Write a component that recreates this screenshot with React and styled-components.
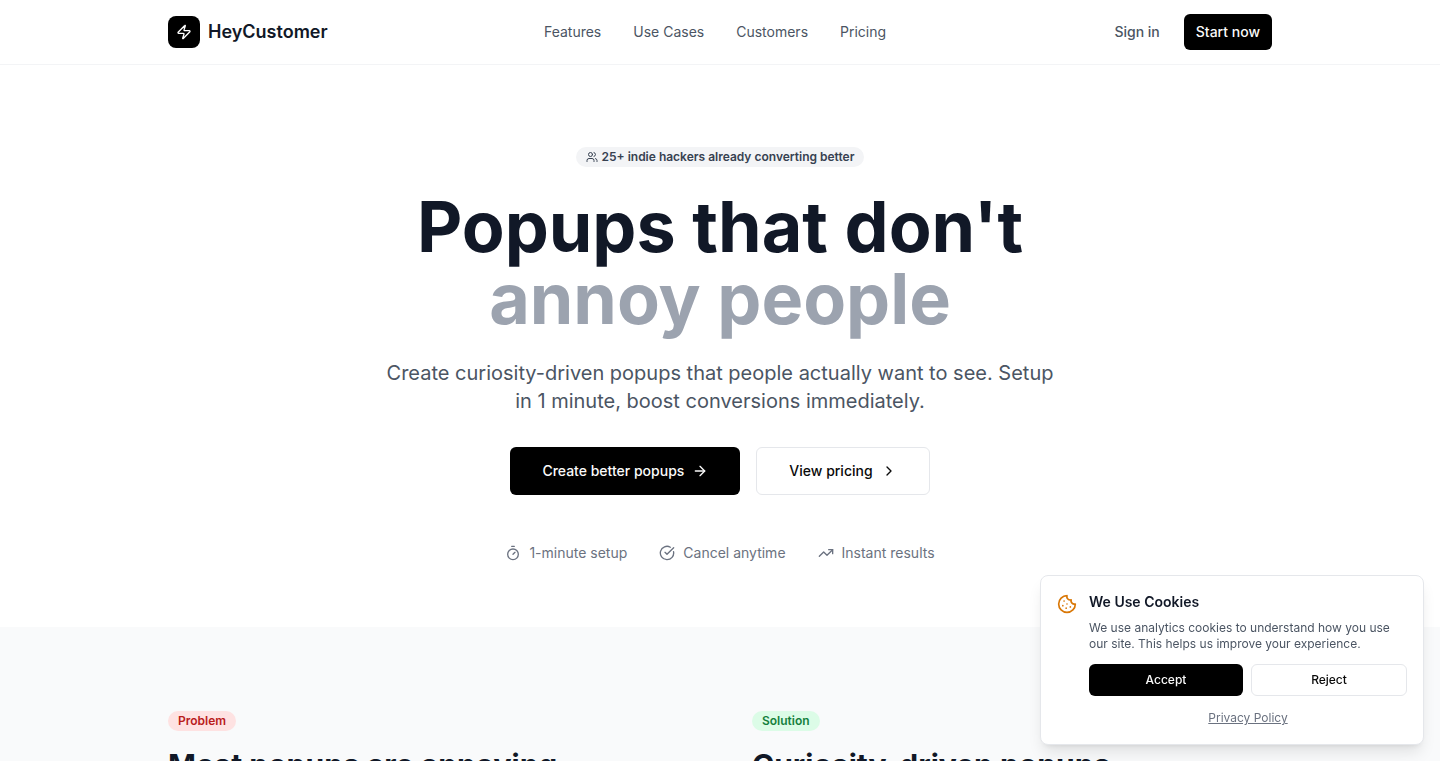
import React from 'react'
import styled, { createGlobalStyle } from 'styled-components';
import { ArrowRight, ChevronRight, CircleCheckBig, Cookie, Timer, TrendingUp, Users, Zap } from 'lucide-react';

const GlobalStyle = createGlobalStyle`
    *, *::before, *::after {
      box-sizing: border-box;
    }
    body {
      margin: 0;
      background-color: #ffffff;
      color: #111827;
      font-family: Inter, 'Liberation Sans', sans-serif;
      font-size: 16px;
      line-height: 24px;
    }
    h1, h2, h3, p {
      margin: 0;
    }
    a {
      color: inherit;
      text-decoration: none;
    }
    svg {
      flex-shrink: 0;
    }
`;

const Container = styled.div`
    max-width: 1152px;
    margin: 0 auto;
    padding: 0 24px;
`;

const Header = styled.header`
    background-color: #ffffff;
    border-bottom: 1px solid #f3f4f6;
`;

const HeaderRow = styled(Container)`
    height: 64px;
    display: flex;
    align-items: center;
    justify-content: space-between;
`;

const Logo = styled.a`
    display: flex;
    align-items: center;
    gap: 8px;
    font-size: 18px;
    line-height: 28px;
    font-weight: 600;
`;

const LogoMark = styled.span`
    width: 32px;
    height: 32px;
    display: flex;
    align-items: center;
    justify-content: center;
    border-radius: 8px;
    background-color: #000000;
    color: #ffffff;
`;

const Nav = styled.nav`
    display: flex;
    gap: 32px;
    font-size: 14px;
    line-height: 20px;
    color: #4b5563;
`;

const Actions = styled.div`
    display: flex;
    align-items: center;
    gap: 12px;
`;

const SignIn = styled.a`
    padding: 8px 12px;
    font-size: 14px;
    line-height: 20px;
    font-weight: 500;
    color: #4b5563;
`;

const sizes = {
  small: { height: '32px', padding: '0 12px', font: '12px' },
  medium: { height: '36px', padding: '0 12px', font: '14px' },
  large: { height: '48px', padding: '0 32px', font: '14px' },
};

const Button = styled.button`
    display: inline-flex;
    align-items: center;
    justify-content: center;
    gap: 8px;
    flex: ${({ $grow }) => ($grow ? '1 1 0' : '0 0 auto')};
    height: ${({ $size }) => sizes[$size].height};
    padding: ${({ $size }) => sizes[$size].padding};
    font-family: inherit;
    font-size: ${({ $size }) => sizes[$size].font};
    line-height: 20px;
    font-weight: 500;
    border: ${({ $outline }) => ($outline ? '1px solid #e5e7eb' : 'none')};
    border-radius: 6px;
    background-color: ${({ $outline }) => ($outline ? '#ffffff' : '#000000')};
    color: ${({ $outline }) => ($outline ? '#0a0a0a' : '#fafafa')};
    white-space: nowrap;
    cursor: pointer;
`;

const Hero = styled.section`
    display: flex;
    flex-direction: column;
    align-items: center;
    padding: 82px 24px 64px;
    text-align: center;
`;

const tones = {
  gray: { background: '#f3f4f6', text: '#374151' },
  red: { background: '#fee2e2', text: '#b91c1c' },
  green: { background: '#dcfce7', text: '#15803d' },
};

const Badge = styled.div`
    display: inline-flex;
    align-items: center;
    gap: 4px;
    padding: 2px 10px;
    border-radius: 10px;
    font-size: 12px;
    line-height: 16px;
    font-weight: 600;
    background-color: ${({ $tone }) => tones[$tone].background};
    color: ${({ $tone }) => tones[$tone].text};
`;

const Title = styled.h1`
    margin-top: 24px;
    font-size: 70px;
    line-height: 72px;
    font-weight: 700;
    span {
      display: block;
      color: #9ca3af;
    }
`;

const Lead = styled.p`
    max-width: 672px;
    margin-top: 24px;
    font-size: 20px;
    line-height: 28px;
    color: #4b5563;
`;

const ButtonRow = styled.div`
    display: flex;
    gap: ${({ $gap }) => $gap};
`;

const HeroButtons = styled(ButtonRow)`
    margin-top: 32px;
`;

const Perks = styled.div`
    display: flex;
    gap: 32px;
    margin-top: 48px;
    font-size: 14px;
    line-height: 20px;
    color: #6b7280;
`;

const Perk = styled.div`
    display: flex;
    align-items: center;
    gap: 8px;
`;

const Compare = styled.section`
    background-color: #f9fafb;
    padding: 80px 0;
`;

const CompareGrid = styled(Container)`
    display: grid;
    grid-template-columns: 1fr 1fr;
    gap: 64px;
`;

const CompareTitle = styled.h2`
    margin-top: 16px;
    font-size: 30px;
    line-height: 36px;
    font-weight: 700;
`;

const CookieCard = styled.aside`
    position: fixed;
    right: 16px;
    bottom: 16px;
    width: 384px;
    display: flex;
    gap: 12px;
    padding: 16px;
    border: 1px solid #e5e7eb;
    border-radius: 8px;
    background-color: #ffffff;
    box-shadow: 0 10px 15px -3px rgba(0, 0, 0, 0.1), 0 4px 6px -4px rgba(0, 0, 0, 0.1);
    > svg {
      margin-top: 2px;
      color: #d97706;
    }
`;

const CookieBody = styled.div`
    flex: 1;
    display: flex;
    flex-direction: column;
    h3 {
      font-size: 14px;
      line-height: 20px;
      font-weight: 600;
    }
    p {
      margin: 8px 0 12px;
      font-size: 12px;
      line-height: 16px;
      color: #4b5563;
    }
`;

const PolicyLink = styled.a`
    align-self: center;
    margin-top: 12px;
    font-size: 12px;
    line-height: 20px;
    color: #6b7280;
    text-decoration: underline;
`;

const links = ['Features', 'Use Cases', 'Customers', 'Pricing'];

const perks = [
  { icon: Timer, label: '1-minute setup' },
  { icon: CircleCheckBig, label: 'Cancel anytime' },
  { icon: TrendingUp, label: 'Instant results' },
];

const CookieNotice = () => {
  return (
    <CookieCard aria-labelledby='cookie-title'>
      <Cookie size={20} />
      <CookieBody>
        <h3 id='cookie-title'>We Use Cookies</h3>
        <p>We use analytics cookies to understand how you use our site. This helps us improve your experience.</p>
        <ButtonRow $gap='8px'>
          <Button $size='small' $grow>Accept</Button>
          <Button $size='small' $grow $outline>Reject</Button>
        </ButtonRow>
        <PolicyLink href='#privacy'>Privacy Policy</PolicyLink>
      </CookieBody>
    </CookieCard>
  )
}

const App = () => {
  return (
    <>
      <GlobalStyle />
      <Header>
        <HeaderRow>
          <Logo href='#'>
            <LogoMark><Zap size={16} /></LogoMark>
            HeyCustomer
          </Logo>
          <Nav>
            {links.map((link) => (
              <a key={link} href={`#${link.toLowerCase().replace(' ', '-')}`}>{link}</a>
            ))}
          </Nav>
          <Actions>
            <SignIn href='#sign-in'>Sign in</SignIn>
            <Button $size='medium'>Start now</Button>
          </Actions>
        </HeaderRow>
      </Header>
      <main>
        <Hero>
          <Badge $tone='gray'>
            <Users size={12} />
            25+ indie hackers already converting better
          </Badge>
          <Title>
            Popups that don't
            <span>annoy people</span>
          </Title>
          <Lead>
            Create curiosity-driven popups that people actually want to see. Setup in 1 minute, boost conversions immediately.
          </Lead>
          <HeroButtons $gap='16px'>
            <Button $size='large'>Create better popups <ArrowRight size={16} /></Button>
            <Button $size='large' $outline>View pricing <ChevronRight size={16} /></Button>
          </HeroButtons>
          <Perks>
            {perks.map(({ icon: Icon, label }) => (
              <Perk key={label}><Icon size={16} />{label}</Perk>
            ))}
          </Perks>
        </Hero>
        <Compare>
          <CompareGrid>
            <div>
              <Badge $tone='red'>Problem</Badge>
              <CompareTitle>Most popups are annoying</CompareTitle>
            </div>
            <div>
              <Badge $tone='green'>Solution</Badge>
              <CompareTitle>Curiosity-driven popups</CompareTitle>
            </div>
          </CompareGrid>
        </Compare>
      </main>
      <CookieNotice />
    </>
  )
}

export default App
